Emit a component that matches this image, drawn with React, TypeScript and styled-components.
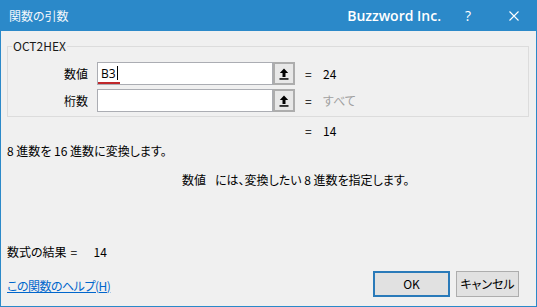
import styled, { createGlobalStyle } from 'styled-components'

const GlobalStyle = createGlobalStyle`
  html, body {
    margin: 0;
    padding: 0;
    background: #f0f0f0;
  }
  body {
    font-family: "Noto Sans CJK JP", "Noto Sans", sans-serif;
    font-feature-settings: "palt";
    font-size: 12px;
    color: #000;
  }
`

const Window = styled.div`
  width: 537px;
  height: 307px;
  box-sizing: border-box;
  border: 1px solid #2b89c9;
  border-top: none;
  background: #f0f0f0;
  display: flex;
  flex-direction: column;
`

const TitleBar = styled.div`
  height: 31px;
  margin: 0 -1px;
  background: #2b89c9;
  color: #fff;
  display: flex;
  align-items: center;
  padding-left: 9px;
`

const Caption = styled.span`
  font-size: 12px;
  line-height: 14px;
  flex: 1;
  color: #f4f8fc;
`

const Brand = styled.span`
  font-family: "Open Sans", sans-serif;
  font-weight: 600;
  font-size: 14px;
  margin-right: 4px;
`

const CaptionButton = styled.div`
  width: 46px;
  height: 31px;
  display: flex;
  align-items: center;
  justify-content: center;
  font-family: "Open Sans", sans-serif;
  font-size: 14px;
`

const Body = styled.div`
  flex: 1;
  display: flex;
  flex-direction: column;
  padding: 0 6px 8px;
`

const Group = styled.fieldset`
  margin: 8px 1px 0 0;
  padding: 9px 0 4px 4px;
  border: 1px solid #dcdcdc;
  min-width: 0;
`

const Legend = styled.legend`
  padding: 0 1px;
  font-size: 12px;
  line-height: 14px;
  color: #1a1a1a;
`

const ArgGrid = styled.div`
  display: grid;
  grid-template-columns: 76px 198px auto;
  grid-auto-rows: 23px;
  column-gap: 9px;
  row-gap: 4px;
  align-items: center;
`

const ArgLabel = styled.span`
  text-align: right;
  line-height: 14px;
`

const Field = styled.div`
  display: flex;
  height: 23px;
`

const TextBox = styled.div`
  flex: 1;
  box-sizing: border-box;
  border: 1px solid #abadb3;
  background: #fff;
  display: flex;
  align-items: center;
`

const Composing = styled.span`
  display: inline-flex;
  align-items: center;
  padding: 0 2px 0 3px;
  height: 19px;
  box-sizing: border-box;
  border-bottom: 2px solid #c0282c;
  margin-top: 1px;
  font-family: "Open Sans", sans-serif;
  font-size: 12px;
`

const Caret = styled.span`
  display: inline-block;
  width: 1px;
  height: 14px;
  background: #000;
  margin-left: 1px;
`

const RefButton = styled.div`
  width: 22px;
  box-sizing: border-box;
  border: 2px solid #adadad;
  background: #e8e8e8;
  display: flex;
  align-items: center;
  justify-content: center;
`

const Result = styled.div<{ $muted?: boolean }>`
  display: flex;
  align-items: center;
  margin-left: 1px;
  line-height: 14px;
  color: ${(p) => (p.$muted ? '#a0a0a0' : '#000')};
`

const Equals = styled.span<{ $width?: number }>`
  display: inline-block;
  width: ${(p) => p.$width ?? 18}px;
  color: #000;
`

const TotalRow = styled.div`
  margin-top: 7px;
  padding-left: 298px;
  line-height: 14px;
  display: flex;
`

const Description = styled.div`
  margin-top: 6px;
  line-height: 14px;
`

const ArgHelp = styled.div`
  margin-top: 15px;
  padding-left: 175px;
  line-height: 14px;
`

const ArgName = styled.span`
  margin-right: 9px;
`

const FormulaResult = styled.div`
  margin-top: 58px;
  line-height: 14px;
  display: flex;
`

const ResultLabel = styled.span`
  margin-right: 4px;
`

const Footer = styled.div`
  margin-top: 12px;
  display: flex;
  align-items: center;
  padding-right: 11px;
`

const HelpLink = styled.a`
  flex: 1;
  color: #0066cc;
  text-decoration: underline;
  line-height: 14px;
  padding-top: 3px;
  letter-spacing: -0.5px;
`

const Button = styled.div<{ $default?: boolean }>`
  height: 26px;
  width: ${(p) => (p.$default ? '77px' : '63px')};
  margin-left: ${(p) => (p.$default ? '0' : '6px')};
  box-sizing: border-box;
  border: ${(p) => (p.$default ? '2px solid #2a7ab9' : '1px solid #adadad')};
  background: #e1e1e1;
  display: flex;
  align-items: center;
  justify-content: center;
  line-height: 14px;
`

const UpIcon = () => (
  <svg width="10" height="12" viewBox="0 0 10 12">
    <path d="M5 0.5 L9.2 5 H6.5 V9 H3.5 V5 H0.8 Z" fill="#000" />
    <rect x="0.5" y="10.2" width="9" height="1.5" fill="#000" />
  </svg>
)

const CloseIcon = () => (
  <svg width="10" height="10" viewBox="0 0 10 10">
    <path d="M0.5 0.5 L9.5 9.5 M9.5 0.5 L0.5 9.5" stroke="#fff" strokeWidth="1.1" />
  </svg>
)

const App = () => {
  return (
    <>
      <GlobalStyle />
      <Window>
        <TitleBar>
          <Caption>関数の引数</Caption>
          <Brand>Buzzword Inc.</Brand>
          <CaptionButton>?</CaptionButton>
          <CaptionButton>
            <CloseIcon />
          </CaptionButton>
        </TitleBar>
        <Body>
          <Group>
            <Legend>OCT2HEX</Legend>
            <ArgGrid>
              <ArgLabel>数値</ArgLabel>
              <Field>
                <TextBox>
                  <Composing>
                    B3
                    <Caret />
                  </Composing>
                </TextBox>
                <RefButton>
                  <UpIcon />
                </RefButton>
              </Field>
              <Result>
                <Equals>=</Equals>24
              </Result>
              <ArgLabel>桁数</ArgLabel>
              <Field>
                <TextBox />
                <RefButton>
                  <UpIcon />
                </RefButton>
              </Field>
              <Result $muted>
                <Equals>=</Equals>すべて
              </Result>
            </ArgGrid>
          </Group>
          <TotalRow>
            <Equals>=</Equals>14
          </TotalRow>
          <Description>8 進数を 16 進数に変換します。</Description>
          <ArgHelp>
            <ArgName>数値</ArgName>には、変換したい 8 進数を指定します。
          </ArgHelp>
          <FormulaResult>
            <ResultLabel>数式の結果</ResultLabel>
            <Equals $width={23}>=</Equals>14
          </FormulaResult>
          <Footer>
            <HelpLink href="#">この関数のヘルプ(H)</HelpLink>
            <Button $default>OK</Button>
            <Button>キャンセル</Button>
          </Footer>
        </Body>
      </Window>
    </>
  )
}

export default App
